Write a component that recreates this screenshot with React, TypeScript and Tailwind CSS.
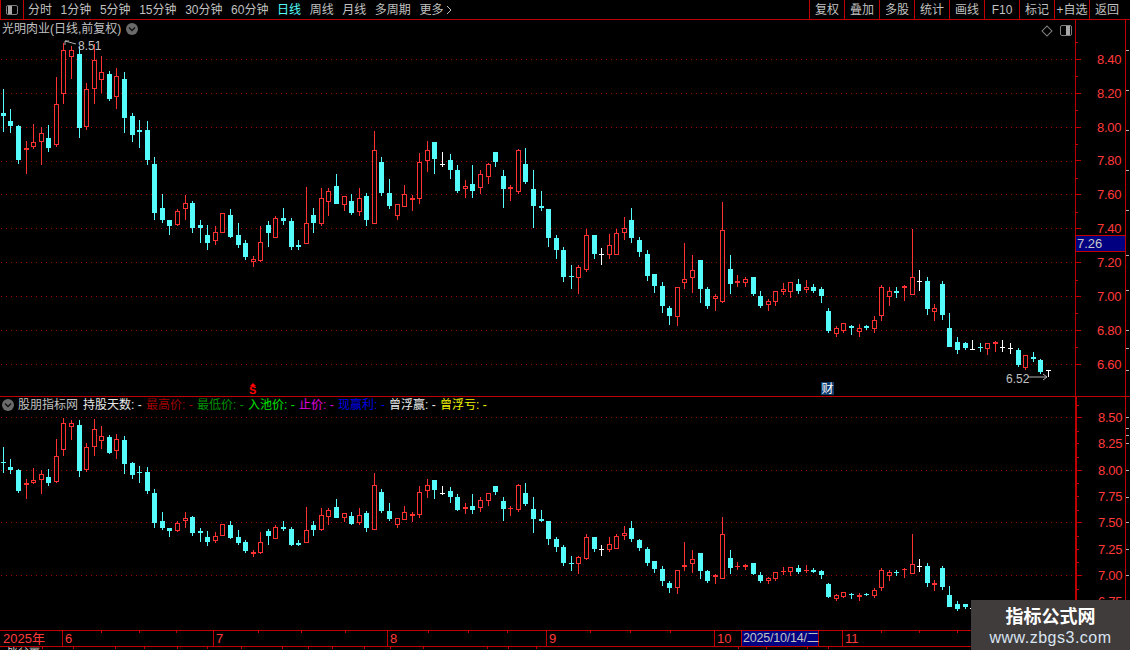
import React from "react";

type C = [number, number, number, number, "c" | "r" | "w"];

const seg = (base: number, rows: C[]): C[] =>
  rows.map(([a, b, c, d, k]) => [base + a / 3, base + b / 3, base + c / 3, base + d / 3, k]);

const candles: C[] = [
  ...seg(30, [
    [178, 249, 258, 305, "c"], [237, 273, 288, 308, "c"], [285, 288, 389, 401, "c"], [333, 355, 361, 431, "r"],
    [282, 337, 352, 358, "r"], [291, 310, 337, 404, "r"], [285, 324, 354, 365, "c"], [141, 223, 346, 351, "r"],
    [40, 61, 193, 221, "r"], [48, 61, 82, 147, "r"], [50, 72, 293, 323, "c"], [159, 178, 290, 299, "r"],
    [43, 91, 178, 221, "r"], [79, 127, 149, 190, "r"], [123, 132, 207, 212, "c"], [114, 139, 200, 236, "r"],
    [126, 147, 263, 308, "c"], [250, 258, 314, 335, "c"], [270, 300, 305, 353, "c"], [273, 300, 389, 404, "c"],
    [381, 402, 548, 569, "c"], [492, 534, 569, 578, "c"], [570, 570, 587, 614, "c"], [537, 544, 586, 588, "r"],
    [494, 520, 536, 569, "r"], [513, 519, 593, 608, "c"], [570, 585, 594, 638, "c"], [585, 615, 638, 659, "c"],
    [588, 607, 632, 644, "r"], [550, 550, 608, 608, "r"], [537, 555, 620, 623, "c"], [579, 615, 644, 653, "c"],
    [630, 639, 680, 689, "c"], [678, 688, 697, 710, "r"], [588, 637, 692, 695, "r"], [573, 585, 608, 650, "c"],
    [558, 565, 623, 623, "r"],
  ]),
  ...seg(120, [
    [264, 294, 303, 314, "c"], [294, 303, 381, 389, "c"], [360, 375, 381, 389, "c"], [201, 310, 371, 371, "r"],
    [264, 285, 309, 339, "c"], [204, 235, 311, 317, "r"], [204, 214, 245, 288, "r"], [162, 198, 252, 252, "c"],
    [228, 229, 254, 273, "r"], [222, 243, 279, 285, "c"], [204, 235, 275, 288, "r"], [219, 228, 300, 318, "c"],
    [33, 91, 311, 311, "r"], [111, 126, 219, 228, "c"], [177, 219, 258, 267, "c"], [252, 253, 287, 300, "r"],
    [195, 223, 260, 260, "r"], [225, 234, 240, 273, "r"], [99, 127, 236, 252, "r"], [63, 91, 122, 156, "r"],
    [66, 66, 117, 162, "c"], [96, 132, 135, 141, "w"], [102, 120, 150, 177, "c"], [135, 150, 213, 219, "c"],
    [180, 199, 208, 234, "r"], [135, 192, 213, 234, "c"], [150, 163, 203, 222, "r"], [129, 133, 170, 192, "r"],
    [96, 96, 126, 141, "c"], [150, 168, 207, 264, "c"], [195, 202, 208, 243, "r"], [87, 91, 215, 222, "r"],
    [84, 132, 186, 192, "c"], [150, 207, 258, 324, "c"], [213, 258, 264, 273, "c"], [267, 267, 354, 381, "c"],
    [345, 354, 390, 417, "c"],
  ]),
  ...seg(190, [
    [171, 180, 261, 276, "c"], [225, 258, 261, 297, "c"], [225, 232, 263, 312, "r"], [117, 136, 239, 245, "r"],
    [135, 135, 192, 207, "c"], [174, 192, 195, 225, "w"], [132, 166, 196, 207, "r"], [117, 130, 194, 194, "r"],
    [81, 115, 128, 150, "r"], [54, 90, 144, 159, "c"], [141, 150, 186, 201, "c"], [180, 192, 258, 273, "c"],
    [252, 252, 288, 309, "c"], [276, 288, 348, 369, "c"], [348, 354, 378, 405, "c"], [292, 292, 380, 408, "r"],
    [159, 268, 278, 297, "r"], [195, 241, 263, 309, "r"], [210, 210, 297, 339, "c"], [291, 297, 348, 357, "c"],
    [312, 319, 326, 363, "r"], [36, 121, 335, 339, "r"], [195, 237, 282, 312, "c"], [255, 274, 278, 291, "r"],
    [262, 268, 278, 291, "r"], [261, 261, 312, 318, "c"], [303, 318, 348, 354, "c"], [327, 334, 344, 363, "r"],
    [303, 304, 335, 348, "r"], [279, 298, 305, 315, "r"], [277, 277, 305, 324, "r"], [267, 282, 303, 312, "c"],
    [270, 292, 299, 309, "r"], [282, 291, 303, 309, "c"], [291, 297, 318, 339, "c"],
  ]),
  ...seg(220, [
    [264, 273, 333, 339, "c"], [318, 325, 342, 351, "r"], [308, 310, 332, 339, "r"], [315, 317, 323, 345, "c"],
    [312, 325, 336, 351, "r"], [315, 318, 324, 330, "c"], [288, 301, 327, 339, "r"], [195, 202, 289, 303, "r"],
    [201, 214, 230, 258, "r"], [201, 213, 218, 234, "c"], [195, 198, 203, 243, "r"], [27, 172, 224, 224, "r"],
    [150, 183, 186, 213, "w"], [171, 183, 267, 285, "c"], [252, 264, 275, 303, "r"], [183, 192, 285, 300, "c"],
    [279, 324, 381, 381, "c"], [351, 366, 390, 402, "c"], [366, 369, 384, 390, "c"], [360, 387, 389, 390, "w"],
    [369, 381, 383, 396, "c"], [369, 370, 387, 405, "r"], [363, 366, 371, 396, "r"], [360, 381, 383, 396, "w"],
    [369, 384, 386, 402, "w"], [384, 390, 435, 441, "c"], [405, 406, 444, 450, "r"], [396, 411, 417, 426, "c"],
    [417, 420, 456, 462, "c"], [450, 451, 453, 471, "w"],
  ]),
];

const COLOR = { c: "#54fcfc", r: "#ff3232", w: "#ffffff" };

function Candle({ i, d, map }: { i: number; d: C; map: (y: number) => number }) {
  const cx = Math.floor(3.33 + i * 7.573);
  const col = COLOR[d[4]];
  const wt = Math.round(map(d[0]));
  const bt = Math.round(map(d[1]));
  const bb = Math.round(map(d[2]));
  const wb = Math.round(map(d[3]));
  const h = Math.max(bb - bt, 1);
  const wick = <rect x={cx} y={wt} width={1} height={Math.max(wb - wt, 1)} fill={col} />;
  if (d[4] === "r" && h > 2) {
    return (
      <g>
        {wick}
        <rect x={cx - 2} y={bt} width={5} height={h} fill="#000" />
        <rect x={cx - 2} y={bt} width={5} height={1} fill={col} />
        <rect x={cx - 2} y={bt + h - 1} width={5} height={1} fill={col} />
        <rect x={cx - 2} y={bt} width={1} height={h} fill={col} />
        <rect x={cx + 2} y={bt} width={1} height={h} fill={col} />
      </g>
    );
  }
  return (
    <g>
      {wick}
      <rect x={cx - 2} y={bt} width={5} height={h} fill={col} />
    </g>
  );
}

function Grid({ rows }: { rows: number[] }) {
  return (
    <g>
      {rows.map((y) => (
        <line key={y} x1={1} x2={1075} y1={y + 0.5} y2={y + 0.5} stroke="#a00000" strokeWidth={1} strokeDasharray="1 4" />
      ))}
    </g>
  );
}

const topGrid = Array.from({ length: 10 }, (_, i) => Math.floor(59.3 + 33.9 * i));
const botGrid = [417, 470, 522, 575];
const mapBottom = (y: number) => {
  const p = 8.4 - (y - 59.3) / 169.5;
  return 417.7 + (8.5 - p) * 105.2;
};

const TOOL = ["分时", "1分钟", "5分钟", "15分钟", "30分钟", "60分钟"];
const TOOL2 = ["周线", "月线", "多周期"];
const RIGHT = ["复权", "叠加", "多股", "统计", "画线", "F10", "标记", "+自选", "返回"];
const HEAD: [string, string][] = [
  ["持股天数", "text-[#e8e8e8]"],
  ["最高价", "text-[#a00000]"],
  ["最低价", "text-[#009000]"],
  ["入池价", "text-[#00e000]"],
  ["止价", "text-[#e000e0]"],
  ["现赢利", "text-[#0000e8]"],
  ["曾浮赢", "text-[#e8e8e8]"],
  ["曾浮亏", "text-[#f0f000]"],
];
const topLabels = ["8.40", "8.20", "8.00", "7.80", "7.60", "7.40", "7.20", "7.00", "6.80", "6.60"];
const botLabels = ["8.50", "8.25", "8.00", "7.75", "7.50", "7.25", "7.00", "6.75"];

function Circle() {
  return (
    <span className="flex h-[12px] w-[12px] shrink-0 items-center justify-center rounded-full bg-[#6a6a6a]">
      <svg width="8" height="6" viewBox="0 0 8 6" fill="none" stroke="#111" strokeWidth="1.3">
        <path d="M1 1.5 L4 4.5 L7 1.5" />
      </svg>
    </span>
  );
}

function AxisRow({ t, h, major }: { t: string; h: string; major: boolean }) {
  return (
    <div className={`relative flex items-center ${h}`}>
      <span className={`h-px shrink-0 bg-[#c00000] ${major ? "w-[5px]" : "w-[2px]"}`} />
      <span className={`text-[13px] leading-none tracking-[-0.3px] text-[#ff3a3a] ${major ? "ml-[16px]" : "ml-[19px]"}`}>{t}</span>
      <span className="absolute left-0 top-0 h-px w-[2px] bg-[#c00000]" />
    </div>
  );
}

function EdgeTicks({ ys }: { ys: number[] }) {
  return (
    <div className="relative w-[3px] shrink-0">
      {ys.map((y) => (
        <span key={y} className="absolute left-0 h-px w-[3px] bg-[#b0b0b0]" style={{ top: y }} />
      ))}
    </div>
  );
}

export default function App() {
  return (
    <div className="relative flex h-[650px] w-[1130px] flex-col overflow-hidden bg-black text-[12px] leading-none text-[#c0c0c0] [font-family:'Liberation_Sans','Noto_Sans_CJK_SC',sans-serif]">
      {/* toolbar */}
      <div className="flex h-[20px] shrink-0 items-center border-b border-[#c00000]">
        <div className="flex h-full w-[24px] shrink-0 items-center justify-center border-x border-[#c00000]">
          <span className="flex h-[10px] w-[12px] overflow-hidden rounded-[2px] border border-[#808080]">
            <span className="ml-[1px] w-[4px] bg-[#a8a8a8]" />
          </span>
        </div>
        <div className="ml-[4px] flex items-center gap-[8.6px]">
          {TOOL.map((t) => (
            <span key={t}>{t}</span>
          ))}
          <span className="text-[#54fcfc]">日线</span>
          {TOOL2.map((t) => (
            <span key={t}>{t}</span>
          ))}
          <span className="flex items-center gap-[3px]">
            更多
            <svg width="6" height="10" viewBox="0 0 6 10" fill="none" stroke="#c0c0c0">
              <path d="M1 1 L5 5 L1 9" />
            </svg>
          </span>
        </div>
        <div className="ml-auto flex h-full pr-[6px]">
          {RIGHT.map((t) => (
            <span key={t} className="flex w-[35px] items-center justify-center border-l border-[#c00000]">{t}</span>
          ))}
        </div>
      </div>

      {/* upper panel */}
      <div className="relative flex h-[377px] shrink-0 border-b border-[#c00000]">
        <div className="relative w-[1075px] shrink-0">
          <svg className="block" width={1075} height={376} viewBox="0 20 1075 376" shapeRendering="crispEdges">
            <Grid rows={topGrid} />
            {candles.map((d, i) => (
              <Candle key={i} i={i} d={d} map={(y) => y} />
            ))}
            <g fill="none" stroke="#b0b0b0" shapeRendering="auto">
              <path d="M65 45 V41 H69 M65 41 L76 44" />
              <path d="M1028 377 H1047 M1043 374 L1047 377 L1043 380" />
            </g>
          </svg>
          <div className="absolute left-[2px] top-[3px] flex items-center gap-[5px]">
            <span className="text-[12px]">光明肉业(日线,前复权)</span>
            <Circle />
          </div>
          <span className="absolute left-[78px] top-[20px] text-[12px]">8.51</span>
          <span className="absolute left-[1006px] top-[353px] text-[12px]">6.52</span>
          <div className="absolute right-[3px] top-[5px] flex items-center gap-[9px]">
            <span className="h-[8px] w-[8px] rotate-45 border border-[#808080]" />
            <span className="flex h-[11px] w-[12px] justify-end overflow-hidden rounded-[2px] border border-[#808080]">
              <span className="mr-[1px] w-[4px] bg-[#a8a8a8]" />
            </span>
          </div>
          <div className="absolute left-[249px] top-[363px] flex flex-col items-center text-[#ff0000]">
            <svg width="6" height="3" viewBox="0 0 6 3">
              <path d="M3 0 L6 3 H0 Z" fill="#ff0000" />
            </svg>
            <span className="text-[11px] font-bold leading-[9px]">S</span>
          </div>
          <span className="absolute left-[821px] top-[362px] flex h-[13px] w-[13px] items-center justify-center bg-[#0d3c6e] text-[12px] text-white">财</span>
        </div>
        <div className="relative w-[51px] shrink-0 border-l border-r border-[#c00000] pt-[22.3px]">
          {topLabels.map((t) => (
            <AxisRow key={t} t={t} h="h-[33.9px]" major />
          ))}
          <span className="absolute left-0 top-[215px] flex h-[17px] w-full items-center border-y border-[#c00000] bg-[#000080] pl-[1px] text-[13px] text-[#c8c8c8]">7.26</span>
        </div>
        <EdgeTicks ys={[30, 70, 110, 150, 190, 235, 270, 310, 328, 350]} />
      </div>

      {/* lower panel */}
      <div className="relative flex h-[233px] shrink-0">
        <div className="relative w-[1075px] shrink-0 overflow-hidden">
          <svg className="block" width={1075} height={233} viewBox="0 397 1075 233" shapeRendering="crispEdges">
            <Grid rows={botGrid} />
            {candles.map((d, i) => (
              <Candle key={i} i={i} d={d} map={mapBottom} />
            ))}
          </svg>
          <div className="absolute left-[2px] top-[2px] flex items-center whitespace-nowrap">
            <Circle />
            <span className="ml-[4px] w-[65px]">股朋指标网</span>
            {HEAD.map(([t, c], i) => (
              <span key={t} className={`${c} ${i === 0 ? "w-[63px]" : t === "止价" ? "w-[39px]" : "w-[51px]"}`}>
                {t}:&nbsp;-
              </span>
            ))}
          </div>
        </div>
        <div className="w-[51px] shrink-0 border-l-2 border-r border-[#c00000] pt-[7.5px]">
          {botLabels.map((t, i) => (
            <AxisRow key={t} t={t} h="h-[26.3px]" major={i % 2 === 0} />
          ))}
        </div>
        <EdgeTicks ys={[20, 31, 38, 46, 73, 100, 125, 152, 178, 205]} />
      </div>

      {/* date strip */}
      <div className="relative flex h-[17px] shrink-0 items-center border-y border-[#c00000] text-[13px] text-[#ff3a3a]">
        <span className="flex h-full w-[63px] items-center border-r border-[#c00000] pl-[3px]">2025年</span>
        <span className="flex h-full w-[151px] items-center border-r border-[#c00000] pl-[2px]">6</span>
        <span className="flex h-full w-[174px] items-center border-r border-[#c00000] pl-[2px]">7</span>
        <span className="flex h-full w-[159px] items-center border-r border-[#c00000] pl-[2px]">8</span>
        <span className="flex h-full w-[168px] items-center border-r border-[#c00000] pl-[2px]">9</span>
        <span className="flex h-full w-[26px] items-center pl-[2px]">10</span>
        <span className="flex h-full w-[78px] items-center whitespace-nowrap border-x border-[#c00000] bg-[#000080] pl-[1px] text-[12.5px] tracking-[-0.2px] text-[#c0c0c0]">2025/10/14/二</span>
        <span className="flex h-full w-[24px] items-center border-r border-[#c00000]" />
        <span className="flex h-full items-center pl-[2px]">11</span>
        <svg className="absolute left-0 top-0" width={1130} height={3} shapeRendering="crispEdges">
          {[101, 139, 176, 258, 301, 345, 428, 468, 507, 590, 630, 670, 881, 919, 957].map((x) => (
            <rect key={x} x={x} y={0} width={1} height={2} fill="#c00000" />
          ))}
        </svg>
      </div>

      {/* clipped row under the strip */}
      <div className="relative flex h-[3px] shrink-0 overflow-hidden pl-[7px] text-[11px] text-[#d0d0d0]">
        <span className="leading-[13px] [margin-top:-3px]">成交量</span>
        <svg className="absolute left-0 top-0" width={1130} height={3} shapeRendering="crispEdges">
          {[42, 73, 115, 144, 177, 207, 241, 282, 308, 332, 364, 390, 423, 487, 508, 536, 738, 766, 807, 828].map((x) => (
            <rect key={x} x={x} y={0} width={1} height={2} fill="#c00000" />
          ))}
        </svg>
      </div>

      {/* watermark */}
      <div className="absolute bottom-0 right-0 flex h-[50px] w-[159px] flex-col items-center justify-center gap-[4px] bg-[#413c3c]">
        <span className="text-[18px] font-bold leading-[22px] text-white [font-family:'Noto_Sans_CJK_SC',sans-serif]">指标公式网</span>
        <span className="text-[16px] leading-[16px] tracking-[0.5px] text-[#d8e4f0]">www.zbgs3.com</span>
      </div>
    </div>
  );
}
